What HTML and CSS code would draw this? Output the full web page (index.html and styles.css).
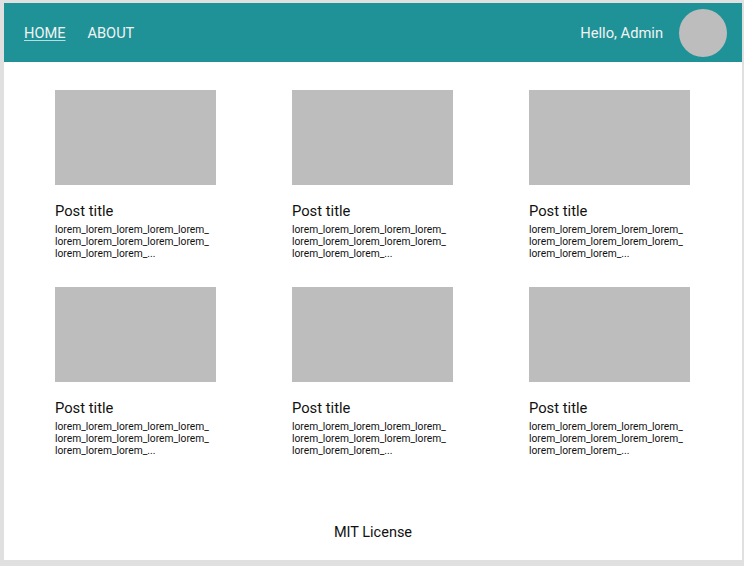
FILE: index.html
```html
<!DOCTYPE html>
<html lang="en">
<head>
<meta charset="utf-8">
<title>Blog</title>
<link rel="stylesheet" href="styles.css">
</head>
<body>
<div class="page">
  <header class="header">
    <nav class="nav">
      <a class="nav-link active" href="#">HOME</a>
      <a class="nav-link" href="#">ABOUT</a>
    </nav>
    <div class="user">
      <span class="greeting">Hello, Admin</span>
      <div class="avatar"></div>
    </div>
  </header>
  <main class="posts">
    <article class="card"><div class="thumb"></div><h2 class="title">Post title</h2><p class="desc">lorem_lorem_lorem_lorem_lorem_ lorem_lorem_lorem_lorem_lorem_ lorem_lorem_lorem_...</p></article>
    <article class="card"><div class="thumb"></div><h2 class="title">Post title</h2><p class="desc">lorem_lorem_lorem_lorem_lorem_ lorem_lorem_lorem_lorem_lorem_ lorem_lorem_lorem_...</p></article>
    <article class="card"><div class="thumb"></div><h2 class="title">Post title</h2><p class="desc">lorem_lorem_lorem_lorem_lorem_ lorem_lorem_lorem_lorem_lorem_ lorem_lorem_lorem_...</p></article>
    <article class="card"><div class="thumb"></div><h2 class="title">Post title</h2><p class="desc">lorem_lorem_lorem_lorem_lorem_ lorem_lorem_lorem_lorem_lorem_ lorem_lorem_lorem_...</p></article>
    <article class="card"><div class="thumb"></div><h2 class="title">Post title</h2><p class="desc">lorem_lorem_lorem_lorem_lorem_ lorem_lorem_lorem_lorem_lorem_ lorem_lorem_lorem_...</p></article>
    <article class="card"><div class="thumb"></div><h2 class="title">Post title</h2><p class="desc">lorem_lorem_lorem_lorem_lorem_ lorem_lorem_lorem_lorem_lorem_ lorem_lorem_lorem_...</p></article>
  </main>
  <footer class="footer">MIT License</footer>
</div>
</body>
</html>
```
FILE: styles.css
```css
* { box-sizing: border-box; }
html, body { margin: 0; padding: 0; }
body {
  background: #e0e0e0;
  padding: 3px 2px 6px 4px;
  font-family: Roboto, "Liberation Sans", sans-serif;
  color: #111;
}
.page {
  background: #fff;
  height: 557px;
  display: flex;
  flex-direction: column;
}
.header {
  height: 59px;
  background: #1f9298;
  display: flex;
  align-items: center;
  justify-content: space-between;
  padding: 0 15px 0 20px;
  color: #f2f2f2;
}
.nav { display: flex; gap: 22px; }
.nav-link {
  color: #f2f2f2;
  text-decoration: none;
  font-size: 14.6px;
  line-height: 20px;
}
.nav-link.active {
  text-decoration: underline;
  text-decoration-color: #b7dfe1;
  text-underline-offset: 2px;
}
.user { display: flex; align-items: center; gap: 16px; }
.greeting { font-size: 14.7px; line-height: 20px; }
.avatar {
  width: 48px;
  height: 48px;
  border-radius: 50%;
  background: #bdbdbd;
}
.posts {
  display: grid;
  grid-template-columns: repeat(3, 161px);
  column-gap: 76px;
  row-gap: 27px;
  justify-content: start;
  padding: 28px 0 0 51px;
  align-content: start;
  flex: 1;
}
.card { display: flex; flex-direction: column; }
.thumb {
  height: 95px;
  background: #bdbdbd;
}
.title {
  margin: 16px 0 0;
  font-size: 14.75px;
  line-height: 20px;
  font-weight: 400;
  color: #111;
}
.desc {
  margin: 3px 0 0;
  font-size: 10.25px;
  line-height: 12px;
  color: #111;
  height: 36px;
  overflow: hidden;
}
.footer {
  text-align: center;
  font-size: 14.5px;
  line-height: 20px;
  padding-bottom: 17px;
  color: #111;
}
```
